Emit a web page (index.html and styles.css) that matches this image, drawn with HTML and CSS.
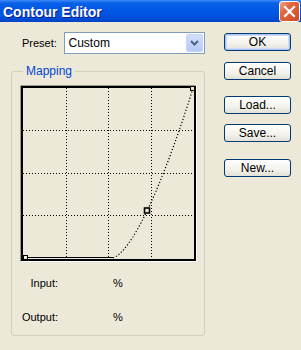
FILE: index.html
```html
<!DOCTYPE html>
<html lang="en">
<head>
<meta charset="utf-8">
<title>Contour Editor</title>
<link rel="stylesheet" href="styles.css">
</head>
<body>
	<div class="titlebar">
		<span class="title">Contour Editor</span>
		<span class="close">
			<svg width="13" height="13" viewBox="0 0 13 13"><path d="M2 2 L11 11 M11 2 L2 11" stroke="#fff" stroke-width="2.2" stroke-linecap="square"/></svg>
		</span>
	</div>

	<div class="content">
		<div class="left">
			<div class="preset_row">
				<label class="preset_label">Preset:</label>
				<div class="select">
					<span class="select_text">Custom</span>
					<span class="drop">
						<svg width="9" height="6" viewBox="0 0 9 6"><path d="M1 1 L4.5 4.5 L8 1" stroke="#4d6185" stroke-width="2" fill="none"/></svg>
					</span>
				</div>
			</div>

			<fieldset class="group">
				<legend>Mapping</legend>
				<div class="graph">
					<svg width="177" height="177" viewBox="20 85 177 177">
						<!-- sunken edge -->
						<path d="M20.5 262 V85.5 H197" stroke="#9d9a8a" fill="none"/>
						<path d="M20.5 261.5 H196.5 V85" stroke="#fff" fill="none"/>
						<rect x="22" y="87" width="173" height="173" stroke="#000" stroke-width="2" fill="#ece9d8"/>
						<!-- grid -->
						<g stroke="#000" stroke-dasharray="1 2">
							<path d="M66.5 88 V259 M108.5 88 V259 M151.5 88 V259"/>
							<path d="M23 130.5 H194 M23 173.5 H194 M23 215.5 H194"/>
						</g>
						<!-- contour -->
						<path d="M23 257.5 H113" stroke="#000"/>
						<polyline fill="none" stroke="#000" stroke-width="1.2" stroke-dasharray="1.2 2"
							points="113,258 118,255.3 123,250.5 128,244.2 133,236.8 138,228.4 143,219.1 148,208.9 153,198 158,186.5 163,174.2 168,161.3 173,147.8 178,133.8 183,119.2 188,104.1 193,88.4"/>
						<!-- points -->
						<rect x="23.5" y="255.5" width="4" height="4" fill="#ece9d8" stroke="#000"/>
						<rect x="190.5" y="86.5" width="4" height="4" fill="#ece9d8" stroke="#000"/>
						<rect x="144.5" y="208" width="5" height="5" fill="#ece9d8" stroke="#000" stroke-width="1.6"/>
					</svg>
				</div>
				<div class="readout readout_first">
					<span class="readout_label">Input:</span>
					<span class="pct">%</span>
				</div>
				<div class="readout">
					<span class="readout_label">Output:</span>
					<span class="pct">%</span>
				</div>
			</fieldset>
		</div>

		<div class="buttons">
			<button class="btn default">OK</button>
			<button class="btn cancel">Cancel</button>
			<button class="btn load">Load...</button>
			<button class="btn save">Save...</button>
			<button class="btn newbtn">New...</button>
		</div>
	</div>
</body>
</html>
```

FILE: styles.css
```css
* {
	box-sizing: border-box;
}

html, body {
	margin: 0;
	padding: 0;
	width: 301px;
	height: 350px;
	overflow: hidden;
	background-color: #ece9d8;
	font-family: "Liberation Sans", Arial, sans-serif;
	font-size: 11px;
	color: #000;
}

.titlebar {
	height: 22px;
	display: flex;
	align-items: center;
	justify-content: space-between;
	padding: 0 1px 0 3px;
	background: linear-gradient(#3d8bf8 0, #0a61e8 3px, #0058e6 45%, #0050dc 80%, #0043c4 100%);
}

.title {
	color: #fff;
	font-weight: bold;
	font-size: 14px;
	text-shadow: 1px 1px #0a1a8a;
	margin-top: 1px;
}

.close {
	width: 21px;
	height: 21px;
	display: flex;
	align-items: center;
	justify-content: center;
	border: 1px solid #fff;
	border-radius: 3px;
	background: linear-gradient(135deg, #f0a48a 0, #e2663f 35%, #cf4a24 100%);
}

.content {
	display: flex;
}

.left {
	width: 205px;
	padding-top: 10px;
}

.preset_row {
	display: flex;
	align-items: center;
	padding-left: 22px;
}

.preset_label {
	width: 42px;
}

.select {
	width: 143px;
	height: 22px;
	display: flex;
	align-items: center;
	justify-content: space-between;
	background: #fff;
	border: 1px solid #7f9db9;
	padding: 1px 1px 1px 4px;
	font-size: 12px;
}

.drop {
	width: 17px;
	height: 18px;
	display: flex;
	align-items: center;
	justify-content: center;
	border-radius: 2px;
	background: linear-gradient(#d2defc, #b6c9f6);
	border: 1px solid #c3d3fd;
}

.group {
	margin: 11px 0 0 11px;
	width: 194px;
	height: 271px;
	border: 1px solid #d0d0bf;
	border-radius: 3px;
	padding: 0 0 0 8px;
}

.group legend {
	color: #0046d5;
	padding: 0 3px;
	margin-left: 3px;
	line-height: 13px;
	font-size: 12px;
}

.graph {
	margin-top: 7px;
	height: 177px;
}

.graph svg {
	display: block;
}

.readout {
	display: flex;
	height: 14px;
	align-items: center;
	margin-top: 20px;
}

.readout_first {
	margin-top: 14px;
}

.readout_label {
	width: 38px;
	text-align: right;
}

.pct {
	margin-left: 55px;
}

.buttons {
	display: flex;
	flex-direction: column;
	margin-left: 19px;
	padding-top: 11px;
}

.btn {
	width: 67px;
	height: 18px;
	padding: 0;
	font-family: "Liberation Sans", Arial, sans-serif;
	font-size: 12px;
	color: #000;
	border: 1px solid #003c74;
	border-radius: 3px;
	background: linear-gradient(#ffffff, #f3f2ec 60%, #e2e0d6);
	line-height: 15px;
}

.default {
	box-shadow: inset 0 0 0 1px #a9c4f3, inset 0 0 0 2px #cfdcf9;
}

.cancel {
	margin-top: 11px;
}

.load {
	margin-top: 16px;
}

.save {
	margin-top: 10px;
}

.newbtn {
	margin-top: 17px;
}
```
